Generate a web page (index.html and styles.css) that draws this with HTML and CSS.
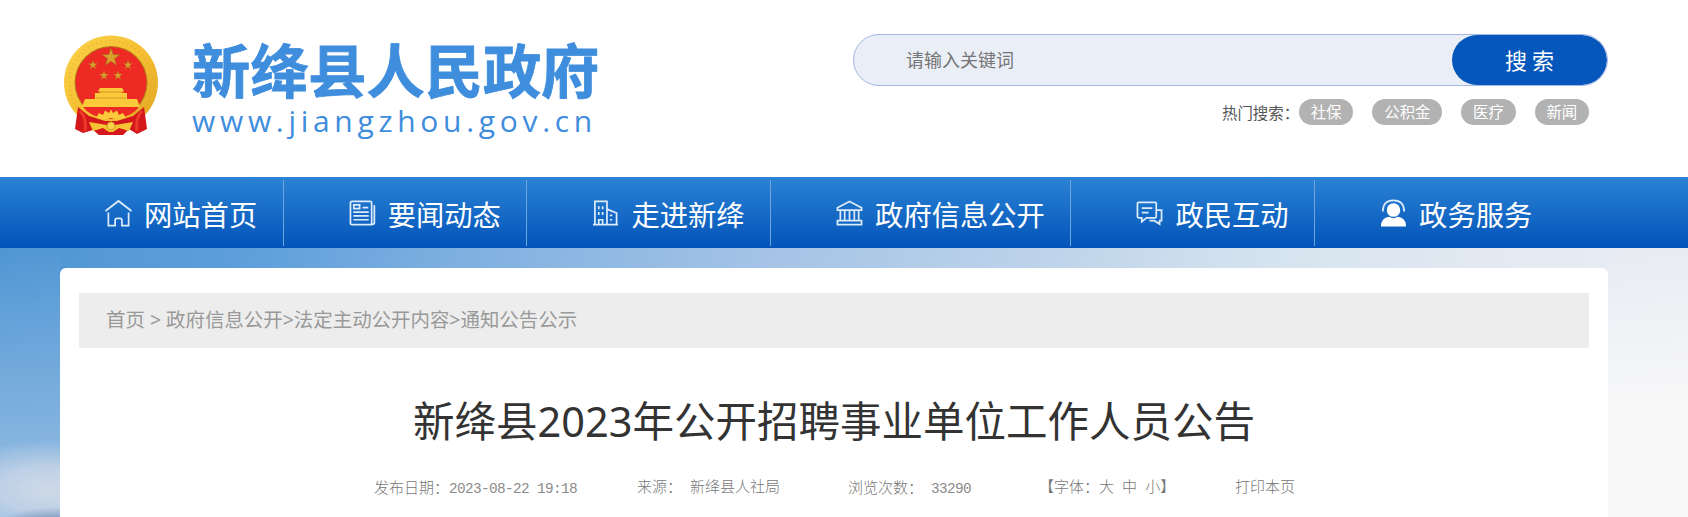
FILE: index.html
```html
<!DOCTYPE html>
<html lang="zh-CN">
<head>
<meta charset="utf-8">
<title>新绛县人民政府</title>
<link rel="stylesheet" href="styles.css">
</head>
<body>
<header class="header wrap">
  <a class="brand">
    <svg class="emblem" viewBox="0 0 96 102" width="96" height="102">
      <defs>
        <linearGradient id="gold" x1="0" y1="0" x2="1" y2="1">
          <stop offset="0" stop-color="#fbd24a"/><stop offset=".5" stop-color="#f5c032"/><stop offset="1" stop-color="#e0a424"/>
        </linearGradient>
        <path id="star" d="M0-10 2.3-3.1 9.5-3.1 3.7 1.2 5.9 8.1 0 3.9-5.9 8.1-3.7 1.2-9.5-3.1-2.3-3.1Z"/>
      </defs>
      <circle cx="48" cy="48.500" r="47" fill="url(#gold)"/>
      <circle cx="48" cy="48.500" r="41.500" fill="none" stroke="#e2a526" stroke-width="3" stroke-dasharray="1.500 3" opacity=".35"/>
      <circle cx="48" cy="48.500" r="36.500" fill="#b57b18"/>
      <circle cx="48" cy="48.500" r="35.500" fill="#ee2a24"/>
      <g fill="#d9a02c" stroke="#a8641a" stroke-width=".6">
        <use href="#star" transform="translate(48 23.500) scale(.95)"/>
        <use href="#star" transform="translate(30 31) scale(.48)"/>
        <use href="#star" transform="translate(65 31) scale(.48)"/>
        <use href="#star" transform="translate(41 41.500) scale(.48)"/>
        <use href="#star" transform="translate(55 41.500) scale(.48)"/>
      </g>
      <path d="M37 54H59L61 57 59 58V59H64V65H74L77 73H19L22 65H32V59H37V58L35 57Z" fill="#fbca3a"/>
      <path d="M35 58H61M33 64H63" stroke="#c98a20" stroke-width=".8"/>
      <path d="M20 73H76Q70 81 57 84Q48 86 39 84Q26 81 20 73Z" fill="#ee2a24"/>
      <path d="M15 72Q24 84 40 85H56Q72 84 81 72L78 86 56 89H40L18 86Z" fill="#f1b92f"/>
      <path d="M33 84 36 79 40 81 42 76.500 46 79 48 75.500 50 79 54 76.500 56 81 60 79 63 84 55 86 48 84 41 86Z" fill="#fbca3a"/>
      <path d="M15 73 26 82 42 87H54L70 82 81 73 84 95 74 100 66 95 60 101H36L30 96 20 99 12 95Z" fill="#d4171b"/>
      <path d="M17 77Q24 84 22 97M79 77Q72 84 74 97" stroke="#ee3a2b" stroke-width="3" fill="none"/>
      <path d="M26 88 44 91 48 87 52 91 70 88 66 97 56 94 50 98 46 98 40 94 30 97Z" fill="#f6c335"/>
      <circle cx="48" cy="92" r="4" fill="#fbd24a" stroke="#b9771b" stroke-width=".6"/>
    </svg>
    <div class="brand-text">
      <div class="brand-name">新绛县人民政府</div>
      <div class="brand-url">www.jiangzhou.gov.cn</div>
    </div>
  </a>
  <div class="search">
    <form class="search-box">
      <input class="search-input" type="text" placeholder="请输入关键词">
      <button class="search-btn" type="button">搜 索</button>
    </form>
    <div class="hot">
      <span class="hot-label">热门搜索：</span>
      <a class="tag">社保</a><a class="tag">公积金</a><a class="tag">医疗</a><a class="tag">新闻</a>
    </div>
  </div>
</header>

<nav class="nav">
  <div class="nav-inner wrap">
    <a class="nav-item nav-first">
      <svg class="icon" viewBox="0 0 28 28"><path d="M.5 12 14 1.500 27.500 12M3.500 13.500V27H10.500V21.500Q10.500 19.500 12.500 19.500H15.500Q17.500 19.500 17.500 21.500V27H24.500V13.500"/></svg>网站首页</a>
    <a class="nav-item">
      <svg class="icon" viewBox="0 0 28 28"><path d="M3 2H22Q23.500 2 23.500 3.500V26H3Q1.500 26 1.500 24.500V3.500Q1.500 2 3 2ZM26.300 6V24Q26.300 26 23 26M5 5.500H11V9.500H5ZM14 8.500H20M4.500 13H20.500M4.500 17H20.500M4.500 21H20.500"/></svg>要闻动态</a>
    <a class="nav-item">
      <svg class="icon" viewBox="0 0 28 28"><path d="M1 26H27M3 26V2H15.500V26M15.500 10 25.500 14V26M7 7V10M11 7V10M7 13V16M11 13V16M7 26V21H11V26M18.500 16.500H21M18.500 21H21"/></svg>走进新绛</a>
    <a class="nav-item">
      <svg class="icon" viewBox="0 0 28 28"><path d="M1.500 8.500 14 2 26.500 8.500V11H1.500ZM4.500 11V22M9 11V22M14 11V22M19 11V22M23.500 11V22M1.500 22H26.500V26H1.500Z"/></svg>政府信息公开</a>
    <a class="nav-item">
      <svg class="icon" viewBox="0 0 28 28"><path d="M2.500 3H20Q21 3 21 4V18Q21 19 20 19H11L6 23V19H2.500Q1.500 19 1.500 18V4Q1.500 3 2.500 3ZM6 9H17M6 13.500H13M21 11H26.500V22H24.500V25.500L19 22H14"/></svg>政民互动</a>
    <a class="nav-item nav-last">
      <svg class="icon" viewBox="0 0 28 28"><circle cx="14" cy="11" r="7" class="solid"/><path class="solid" d="M1 28Q1 19 9.500 18 14 21 18.500 18 27 19 27 28Z"/><path d="M3 12.500Q3 1 14 1T25 12.500"/></svg>政务服务</a>
  </div>
</nav>

<main class="page">
  <article class="card">
    <div class="crumbs">首页 &gt; 政府信息公开&gt;法定主动公开内容&gt;通知公告公示</div>
    <h1 class="title">新绛县2023年公开招聘事业单位工作人员公告</h1>
    <div class="meta">
      <span class="m-date">发布日期：<span class="num">2023-08-22 19:18</span></span>
      <span class="m-source">来源： 新绛县人社局</span>
      <span class="m-views">浏览次数： <span class="num">33290</span></span>
      <span class="m-size">【字体：大 中 小】</span>
      <span>打印本页</span>
    </div>
  </article>
</main>
</body>
</html>
```
FILE: styles.css
```css
* { box-sizing: border-box; }

body {
  margin: 0;
  height: 517px;
  overflow: hidden;
  display: flex;
  flex-direction: column;
  background: #fff;
  font-family: "Noto Sans", "Noto Sans CJK SC", sans-serif;
}

.wrap { width: 1548px; margin-left: 60px; }

.header {
  height: 177px;
  display: flex;
  justify-content: space-between;
  flex: none;
}

.brand { display: flex; padding: 34px 0 0 3px; }
.emblem { flex: none; }
.brand-text { padding-left: 33px; color: #3f8ddd; white-space: nowrap; }
.brand-name {
  font: 700 58.2px/68px "Noto Sans CJK SC", sans-serif;
  -webkit-text-stroke: .8px #3f8ddd;
}
.brand-url {
  padding-top: 2px;
  font: 30px/34px "Open Sans", sans-serif;
  letter-spacing: 4.7px;
}

.search { width: 755px; padding-top: 34px; }
.search-box {
  display: flex;
  height: 52px;
  border: 1px solid #a3b6e6;
  border-radius: 26px;
  background: #eaeff7;
  overflow: hidden;
}
.search-input {
  flex: 1;
  border: 0;
  padding: 0 0 2px 52px;
  background: transparent;
  font: 18px "Noto Sans CJK SC", sans-serif;
}
.search-input::placeholder { color: #757575; }
.search-btn {
  width: 155px;
  border: 0;
  border-radius: 26px;
  padding: 0 0 3px;
  background: #0557bc;
  color: #fff;
  font: 22px "Noto Sans CJK SC", sans-serif;
}

.hot {
  display: flex;
  justify-content: flex-end;
  align-items: center;
  gap: 19px;
  margin-top: 13px;
  padding-right: 19px;
  height: 26px;
  font: 15.4px/24px "Noto Sans CJK SC", sans-serif;
}
.hot-label { color: #555; margin-right: -19px; }
.tag {
  height: 26px;
  padding: 0 11.8px;
  border-radius: 13px;
  background: #b2b2b2;
  color: #fff;
}

.nav {
  flex: none;
  height: 71px;
  background: linear-gradient(#2b83d4, #0253b9);
}
.nav-inner { display: flex; padding-top: 3px; }
.nav-item {
  display: flex;
  align-items: center;
  height: 66px;
  padding: 2px 25.5px 0 65px;
  border-right: 1px solid #6fa3dd;
  color: #fff;
  font: 28.3px/64px "Noto Sans CJK SC", sans-serif;
}
.nav-first { padding-left: 45px; }
.nav-last { border-right: 0; }
.icon {
  width: 27px;
  height: 28px;
  margin: 0 12px 3px 0;
  fill: none;
  stroke: #dcebfa;
  stroke-width: 1.8;
}
.icon .solid { fill: #fff; stroke: none; }

.page {
  flex: 1;
  padding: 20px 0 0 60px;
  background:
    radial-gradient(ellipse 60px 20px at 55px 279px, #7188b0 0, rgba(113, 136, 176, .7) 40%, rgba(113, 136, 176, 0) 100%),
    radial-gradient(ellipse 115px 50px at 50px 242px, #cfd9e7 0, rgba(203, 215, 232, .8) 45%, rgba(190, 208, 232, 0) 100%),
    linear-gradient(rgba(249, 249, 249, 0), #f9f9f9 65%) 1608px 0 / 80px 100% no-repeat,
    linear-gradient(rgba(139, 183, 224, 0), #8bb7e0 80%) 0 0 / 60px 100% no-repeat,
    linear-gradient(100deg, #4f96d4 0, #5d9edb 14%, #7dafe0 26%, #a4c3e6 44%, #bdd3ea 60%, #d6e4ef 74%, #e5eaf3 88%, #eaecf2 100%);
}

.card {
  width: 1548px;
  height: 249px;
  padding: 25px 19px 0;
  border-radius: 6px 6px 0 0;
  background: #fff;
}
.crumbs {
  height: 55px;
  padding-left: 27px;
  background: #ededed;
  color: #999;
  font-size: 19.44px;
  line-height: 54px;
}
.title {
  margin: 43px 0 0;
  color: #333;
  font-size: 41.5px;
  font-weight: 400;
  line-height: 60px;
  text-align: center;
  white-space: nowrap;
}
.meta {
  display: flex;
  margin-top: 24px;
  padding-left: 295px;
  color: #777;
  font: 300 15px/28px "Liberation Mono", "Noto Sans CJK SC", monospace;
  word-spacing: -.9px;
  white-space: pre;
}
.num {
  color: #8c8c8c;
  font-size: 14.4px;
  letter-spacing: -.64px;
  word-spacing: 0;
}
.m-date { width: 263px; }
.m-source { width: 211px; }
.m-views { width: 191px; }
.m-size { width: 196px; }
```
